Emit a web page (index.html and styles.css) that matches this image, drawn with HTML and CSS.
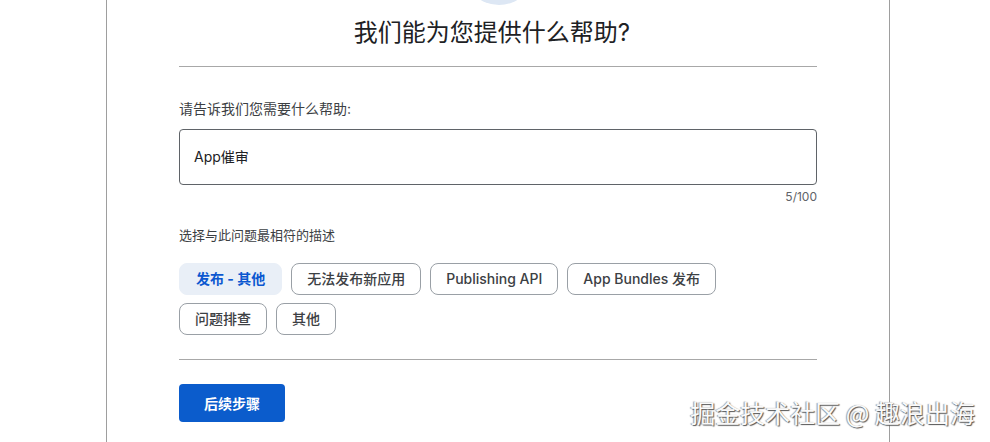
FILE: index.html
```html
<!DOCTYPE html>
<html lang="zh-CN">

<head>
    <meta charset="UTF-8">
    <meta name="viewport" content="width=device-width, initial-scale=1.0">
    <title>我们能为您提供什么帮助?</title>
    <link rel="stylesheet" href="styles.css">
</head>

<body>
    <section class="card">
        <div class="avatar"></div>
        <h1 class="title">我们能为您提供什么帮助?</h1>
        <div class="line"></div>

        <div class="form">
            <label class="label" for="need">请告诉我们您需要什么帮助:</label>
            <div class="input" id="need">App催审</div>
            <div class="count">5/100</div>

            <p class="label label-sub">选择与此问题最相符的描述</p>
            <div class="chips">
                <span class="chip chip-active">发布 - 其他</span>
                <span class="chip">无法发布新应用</span>
                <span class="chip">Publishing API</span>
                <span class="chip">App Bundles 发布</span>
                <span class="chip">问题排查</span>
                <span class="chip">其他</span>
            </div>
        </div>

        <div class="line line-bottom"></div>
        <button class="btn">后续步骤</button>
    </section>

    <div class="mark">掘金技术社区 @ 趣浪出海</div>
</body>

</html>
```

FILE: styles.css
```css
* {
    padding: 0;
    margin: 0;
    box-sizing: border-box;
}

body {
    height: 442px;
    overflow: hidden;
    background: #fff;
    font-family: Inter, "Noto Sans CJK SC", sans-serif;
    color: #202124;
}

/* 卡片 */
.card {
    width: 784px;
    height: 442px;
    margin-left: 106px;
    padding: 0 72px;
    border-left: 1px solid #9e9e9e;
    border-right: 1px solid #9e9e9e;
    display: flex;
    flex-direction: column;
    position: relative;
}

.avatar {
    position: absolute;
    top: -67px;
    left: 356px;
    width: 72px;
    height: 72px;
    border-radius: 50%;
    background: #dde7f4;
}

.title {
    margin-top: 16px;
    padding-right: 12px;
    font-size: 24px;
    line-height: 34px;
    font-weight: 400;
    text-align: center;
    color: #202124;
}

.line {
    height: 1px;
    margin-top: 16px;
    background: #a8a8a8;
}

/* 表单 */
.form {
    display: flex;
    flex-direction: column;
}

.label {
    margin-top: 32px;
    font-size: 14px;
    line-height: 20px;
    color: #3c4043;
}

.label-sub {
    margin-top: 20px;
    font-size: 13px;
}

.input {
    margin-top: 10px;
    height: 56px;
    padding-left: 14px;
    border: 1px solid #5f6368;
    border-radius: 4px;
    font-size: 14px;
    line-height: 54px;
    color: #202124;
}

.count {
    margin-top: 4px;
    font-size: 12px;
    line-height: 16px;
    text-align: right;
    color: #5f6368;
}

/* 选项 */
.chips {
    margin-top: 18px;
    display: flex;
    flex-wrap: wrap;
    gap: 8px 9px;
    width: 560px;
}

.chip {
    height: 32px;
    padding: 0 15px;
    border: 1px solid #9aa0a6;
    border-radius: 8px;
    font-size: 14px;
    line-height: 30px;
    font-weight: 500;
    color: #3c4043;
}

.chip-active {
    padding: 0 16px;
    background: #e9eff7;
    border-color: #e9eff7;
    color: #0b57d0;
    font-weight: 700;
}

.line-bottom {
    margin-top: 24px;
}

.btn {
    margin-top: 24px;
    width: 106px;
    height: 38px;
    border: none;
    border-radius: 4px;
    background: #0b5ccc;
    color: #fff;
    font-family: Inter, "Noto Sans CJK SC", sans-serif;
    font-size: 14px;
    font-weight: 700;
}

/* 水印 */
.mark {
    position: absolute;
    right: 15px;
    top: 394px;
    font-family: "Noto Sans CJK SC", sans-serif;
    font-size: 25px;
    line-height: 36px;
    color: #fafafa;
    text-shadow: 1px 1px 1px #555, -1px 0 1px #999;
}
```
